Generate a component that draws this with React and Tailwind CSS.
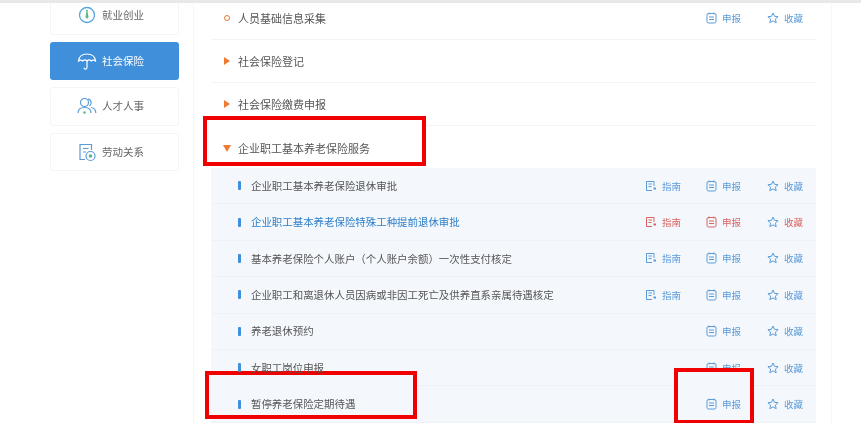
const topRows = [
  { label: "人员基础信息采集", marker: "ring", apply: true },
  { label: "社会保险登记", marker: "right" },
  { label: "社会保险缴费申报", marker: "right" },
  { label: "企业职工基本养老保险服务", marker: "down" },
];

const subRows = [
  { label: "企业职工基本养老保险退休审批", guide: true },
  { label: "企业职工基本养老保险特殊工种提前退休审批", guide: true, hot: true },
  { label: "基本养老保险个人账户（个人账户余额）一次性支付核定", guide: true },
  { label: "企业职工和离退休人员因病或非因工死亡及供养直系亲属待遇核定", guide: true },
  { label: "养老退休预约" },
  { label: "女职工岗位申报" },
  { label: "暂停养老保险定期待遇", front: true },
];

const GuideIcon = ({ color }) => (
  <svg width="12" height="12" viewBox="0 0 12 12" fill="none" stroke={color} strokeWidth="1">
    <path d="M9 6V1.5H1.5v9H7" />
    <path d="M3.5 4h3.5M3.5 6.5h3" />
    <path d="M8.5 8.5h2.5" strokeWidth="2" />
  </svg>
);

const ApplyIcon = ({ color }) => (
  <svg width="11" height="12" viewBox="0 0 11 12" fill="none" stroke={color} strokeWidth="1">
    <rect x="1" y="1.5" width="9" height="9.5" rx="1.5" />
    <path d="M3 .5v2M8 .5v2M3 5h5M3 7.5h5" />
  </svg>
);

const StarIcon = () => (
  <svg width="12" height="12" viewBox="0 0 12 12" fill="none" stroke="#5b9bd8" strokeWidth="1">
    <path d="M6 1l1.5 3.3 3.6.4-2.7 2.4.8 3.6L6 8.9l-3.2 1.8.8-3.6L.9 4.7l3.6-.4z" strokeLinejoin="round" />
  </svg>
);

const TieIcon = () => (
  <svg width="20" height="20" viewBox="0 0 20 20" fill="none">
    <circle cx="10" cy="10" r="7.5" stroke="#58a6dc" strokeWidth="1.3" />
    <path d="M9 5h2l-.4 2 1 5-1.6 2-1.6-2 1-5z" fill="#5cb88a" />
  </svg>
);

const UmbrellaIcon = () => (
  <svg width="20" height="20" viewBox="0 0 20 20" fill="none" stroke="#fff" strokeWidth="1.2">
    <path d="M1.5 10C2 5.5 5.5 3 10 3s8 2.5 8.500 7c-1.500-1.200-3-1.200-4.300 0-1.300-1.200-3-1.200-4.200 0-1.300-1.200-3-1.200-4.200 0-1.300-1.200-2.800-1.200-4.300 0z" />
    <path d="M10 10v6.500c0 2-3 2-3 .3" />
  </svg>
);

const PeopleIcon = () => (
  <svg width="20" height="20" viewBox="0 0 20 20" fill="none" stroke="#5b9bd8" strokeWidth="1.2">
    <circle cx="7.500" cy="6.500" r="4" />
    <path d="M11 2.800a4 4 0 0 1 1.500 7.200" />
    <path d="M1 17c0-3.500 2.800-5.500 6.500-5.500S14 13.500 14 17" />
    <path d="M14 11.500c2.800.5 4.800 2.500 4.800 5.500" />
    <circle cx="7.500" cy="16.500" r="1.300" fill="#5cb88a" stroke="none" />
  </svg>
);

const DocIcon = () => (
  <svg width="20" height="20" viewBox="0 0 20 20" fill="none" stroke="#5b9bd8" strokeWidth="1.2">
    <path d="M8 17.500H3V2.500h11.500V8" />
    <path d="M6 6.500h5.500M6 10h3" />
    <circle cx="13.500" cy="14" r="4.500" />
    <circle cx="13.500" cy="14" r="1.800" fill="#5cb88a" stroke="none" />
  </svg>
);

const SideCard = ({ icon, label, active }) => (
  <div
    className={
      active
        ? "flex h-[38.5px] items-center gap-[5px] rounded-[3px] bg-[#3f8fdb] pl-[27px] text-[10.5px] text-white"
        : "flex h-[38.5px] items-center gap-[5px] rounded-[3px] border border-[#f3f5f8] pl-[26px] text-[10.5px] text-[#666]"
    }
  >
    {icon}
    <span>{label}</span>
  </div>
);

const Marker = ({ type }) => {
  if (type === "ring") {
    return <span className="ml-[1px] mr-[8px] h-[6px] w-[6px] rounded-full border-[1.5px] border-[#ee7b33]" />;
  }
  if (type === "down") {
    return (
      <span className="mr-[7px] h-0 w-0 border-x-[4px] border-t-[7px] border-x-transparent border-t-[#ee7b33]" />
    );
  }
  return (
    <span className="ml-[1px] mr-[8px] h-0 w-0 border-y-[4px] border-l-[6px] border-y-transparent border-l-[#ee7b33]" />
  );
};

const Action = ({ icon, label, color }) => (
  <div className="flex w-[36px] items-center gap-[5px] text-[9.5px]" style={{ color }}>
    {icon}
    <span>{label}</span>
  </div>
);

const App = () => {
  return (
    <div
      className="relative h-[423px] w-[861px] overflow-hidden bg-white blur-[0.4px]"
      style={{ fontFamily: '"Noto Sans CJK SC", "Liberation Sans", sans-serif' }}
    >
      {/* top edge of the browser */}
      <div className="relative z-20 h-[3px] bg-[#e8e8e8]" />

      <div className="-mt-[6px] flex">
        {/* Sidebar */}
        <div className="-mt-[1px] ml-[50px] flex w-[129px] shrink-0 flex-col gap-[7px]">
          <SideCard icon={<TieIcon />} label="就业创业" />
          <SideCard icon={<UmbrellaIcon />} label="社会保险" active />
          <SideCard icon={<PeopleIcon />} label="人才人事" />
          <SideCard icon={<DocIcon />} label="劳动关系" />
        </div>

        {/* Main list */}
        <div className="ml-[14px] h-[440px] w-[639px] shrink-0 border-x border-[#f5f6f8] pl-[17px] pr-[15px]">
          {topRows.map((row, i) => (
            <div
              key={row.label}
              className={
                i < 3
                  ? "flex h-[43px] items-center border-b border-[#f1f3f6] pl-[12px] pr-[13px]"
                  : "flex h-[42px] items-center pl-[12px] pr-[13px] pt-[2px]"
              }
            >
              <div className="relative z-10 flex flex-1 items-center text-[11px] text-[#555]">
                <Marker type={row.marker} />
                <span>{row.label}</span>
              </div>
              {row.apply && (
                <div className="flex gap-[25px]">
                  <Action icon={<ApplyIcon color="#5b9bd8" />} label="申报" color="#5b9bd8" />
                  <Action icon={<StarIcon />} label="收藏" color="#5b9bd8" />
                </div>
              )}
            </div>
          ))}

          <div className="bg-[#f4f8fd] pb-[20px]">
            {subRows.map((row) => {
              const color = row.hot ? "#d9635f" : "#5b9bd8";
              return (
                <div
                  key={row.label}
                  className="flex h-[36.4px] items-center border-b border-[#eef2f8] pl-[27px] pr-[13px]"
                >
                  <div
                    className={
                      row.hot
                        ? "flex flex-1 items-center text-[10.45px] text-[#2f7fc8]"
                        : "relative z-10 flex flex-1 items-center text-[10.45px] text-[#555]"
                    }
                  >
                    <span className="mr-[10px] h-[9px] w-[3px] rounded-[1px] bg-[#3f8fdb]" />
                    <span>{row.label}</span>
                  </div>
                  <div className="flex gap-[25px]">
                    {row.guide && <Action icon={<GuideIcon color={color} />} label="指南" color={color} />}
                    <div className={row.front ? "relative z-10" : ""}>
                      <Action icon={<ApplyIcon color={color} />} label="申报" color={color} />
                    </div>
                    <Action icon={<StarIcon />} label="收藏" color={color} />
                  </div>
                </div>
              );
            })}
          </div>
        </div>
      </div>

      {/* Red annotation boxes pasted over the page */}
      <div className="absolute left-[203px] top-[116px] h-[50px] w-[223px] border-[4px] border-[#f00000] bg-white" />
      <div className="absolute left-[205px] top-[371px] h-[48px] w-[212px] border-[4px] border-[#f00000] bg-[#f4f8fd]" />
      <div className="absolute left-[674px] top-[368px] h-[56px] w-[80px] border-[4px] border-[#f00000] bg-[#f4f8fd]" />
    </div>
  );
};

export default App;
